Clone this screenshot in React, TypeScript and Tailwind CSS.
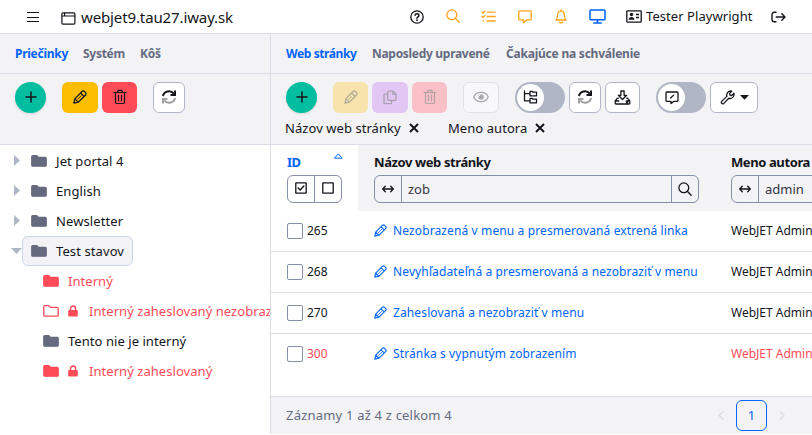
import React from 'react';

type IconProps = { w?: number; h?: number; vb?: string; className?: string; children: React.ReactNode };

function Icon({ w = 16, h = 16, vb, className = '', children }: IconProps) {
  return (
    <svg
      width={w}
      height={h}
      viewBox={vb ?? `0 0 ${w} ${h}`}
      fill="none"
      stroke="currentColor"
      strokeWidth="1.3"
      strokeLinecap="round"
      strokeLinejoin="round"
      className={`shrink-0 ${className}`}
    >
      {children}
    </svg>
  );
}

const Plus = () => (
  <Icon w={12} h={12} className="-mt-px"><path d="M6 1v10M1 6h10" strokeWidth="1.5" /></Icon>
);
const Pencil = ({ size = 14 }: { size?: number }) => (
  <Icon w={size} h={size} vb="0 0 14 14" className="-mt-px">
    <path d="M.9 13.1l.9-4.300L9 1.500a1.700 1.700 0 0 1 2.400 0l1.100 1.100a1.700 1.700 0 0 1 0 2.400L5.200 12.200zM7.600 3l3.400 3.400M1.900 8.900l3.200 3.200" strokeWidth="1.2" />
    <path d="M4.600 9.400l3.600-3.600" strokeWidth=".8" />
  </Icon>
);
const Trash = () => (
  <Icon w={14} h={16} className="-mt-px">
    <path d="M1 3.500h12M2.500 3.500v9.800a1.200 1.200 0 0 0 1.200 1.200h6.600a1.200 1.200 0 0 0 1.200-1.200V3.500M4.300 3.300l1-1.900h3.400l1 1.900" strokeWidth="1.2" />
    <path d="M5.500 6v5.800M8.500 6v5.800" strokeWidth="1.1" />
  </Icon>
);
const Copy = () => (
  <Icon w={14} h={15} className="-mt-px">
    <path d="M5.700 1.200h4.500L13 4v5.300a1 1 0 0 1-1 1H5.700a1 1 0 0 1-1-1V2.200a1 1 0 0 1 1-1zM9.800 1.300v3H13M4.600 4.200H2a1 1 0 0 0-1 1v7.500a1 1 0 0 0 1 1h5.500a1 1 0 0 0 1-1v-2.300" />
  </Icon>
);
const Eye = () => (
  <Icon w={16} h={12} className="-mt-px">
    <path d="M.8 6C3-.1 13-.1 15.2 6 13 12.1 3 12.1.8 6z" />
    <circle cx="8" cy="6" r="2.800" fill="currentColor" stroke="none" />
    <path d="M5.700 5.300l1.600-1.600" stroke="white" strokeWidth="1" />
  </Icon>
);
const Sync = () => (
  <Icon w={16} h={16} className="-mt-px">
    <path d="M1.900 7C2.800 2.200 9.500.4 12.700 4.600M14 1.600v4.500H9.500" strokeWidth="2" strokeLinecap="butt" strokeLinejoin="miter" />
    <path d="M14.100 9c-.9 4.800-7.600 6.600-10.800 2.400M2 14.400V9.900h4.500" strokeWidth="2" opacity=".4" strokeLinecap="butt" strokeLinejoin="miter" />
  </Icon>
);
const Tree = () => (
  <Icon w={15} h={14} className="-mt-px">
    <path d="M1.500 1v9.800h5M1.500 3.700h5M7 1.300h2l.8.9h3.700v3.600H7zM7 8.300h2l.8.9h3.700v3.600H7z" />
  </Icon>
);
const Download = () => (
  <Icon w={17} h={15} className="-mt-px">
    <path d="M6.900 1h3.200v4.300h2.500L8.500 9.500 4.400 5.300h2.500zM4.300 8.200H3.500L1.200 11v2.200c0 .4.3.8.8.8h13c.5 0 .8-.4.8-.8V11l-2.300-2.800h-.8M1.200 11h3.600M12.200 11h3.600M12.600 12.500h1" />
  </Icon>
);
const Feedback = () => (
  <Icon w={14} h={14}>
    <path d="M2 1h10a1 1 0 0 1 1 1v7.400a1 1 0 0 1-1 1H8.700L6 12.600v-2.200H2a1 1 0 0 1-1-1V2a1 1 0 0 1 1-1zM5.600 7l3.100-2.900" />
  </Icon>
);
const Wrench = () => (
  <Icon w={15} h={15} className="-mt-px">
    <path d="M1.700 11.400l5.100-5C6.100 3.500 8.400.4 11.800 1.100L9.600 3.400l.4 1.700 1.700.4 2.200-2.200c.8 3.400-2.200 5.800-5.100 5l-5 5.100c-1.400 1.200-3.300-.7-2.100-2z" />
  </Icon>
);
const Folder = ({ open = false }: { open?: boolean }) => (
  <Icon w={16} h={12}>
    <path d="M1.700.7h4.200l1.600 1.700h6.800c.5 0 .9.4.9.9v7c0 .5-.4.900-.9.900H1.700c-.5 0-.9-.4-.9-.9V1.600c0-.5.4-.9.9-.9z" fill={open ? 'none' : 'currentColor'} />
  </Icon>
);
const Lock = () => (
  <Icon w={10} h={12}>
    <path d="M2.500 5.500V3.600a2.500 2.500 0 0 1 5 0v1.900" strokeWidth="1.500" />
    <rect x=".2" y="5" width="9.600" height="6.600" rx="1" fill="currentColor" stroke="none" />
  </Icon>
);
const Cross = () => (
  <Icon w={10} h={10} className="-mt-px"><path d="M1 1l8 8M9 1L1 9" strokeWidth="2" strokeLinecap="butt" /></Icon>
);
const Arrows = () => (
  <Icon w={12} h={8}><path d="M.8 4h10.400M3.300 1.300L.7 4l2.600 2.700M8.700 1.300L11.300 4 8.700 6.700" strokeWidth="1.300" /></Icon>
);
const Search = () => (
  <Icon w={14} h={14} className="-mt-px"><circle cx="5.800" cy="5.800" r="4.900" /><path d="M9.300 9.300l3.900 3.900" /></Icon>
);
const Square = ({ checked = false }: { checked?: boolean }) => (
  <Icon w={12} h={12} className="-mt-0.5">
    <rect x=".8" y=".8" width="10.400" height="10.400" rx=".4" />
    {checked && <path d="M3.200 6l2 2 3.700-4" strokeWidth="1.400" />}
  </Icon>
);

function Btn({ className, children }: { className: string; children: React.ReactNode }) {
  return (
    <button className={`flex h-[31px] shrink-0 items-center justify-center rounded-md ${className}`}>{children}</button>
  );
}

const outlined = 'border border-[#b1b6c6] bg-white';

function AddButton() {
  return (
    <button className="flex size-[31px] shrink-0 items-center justify-center rounded-full bg-[#00be9f] shadow-sm"><Plus /></button>
  );
}

function Toggle({ children }: { children: React.ReactNode }) {
  return (
    <div className="flex h-[31px] w-[50px] shrink-0 items-center rounded-full bg-[#b1b6c6] pl-0.5">
      <span className="flex size-[27px] items-center justify-center rounded-full bg-white">{children}</span>
    </div>
  );
}

function Header() {
  return (
    <header className="flex h-[34px] shrink-0 items-center border-b border-[#dadde6] bg-white">
      <Icon w={14} h={12} className="ml-[26px]"><path d="M1 1.500h12M1 6.500h12M1 10.500h12" strokeWidth="1.200" strokeLinecap="butt" /></Icon>
      <Icon w={15} h={13} className="mt-1 ml-[21px]"><rect x=".9" y=".9" width="13" height="11.200" rx="1" strokeWidth="1.200" /><path d="M1 4h13M3.600 1v2.600" strokeWidth="1.200" /></Icon>
      <span className="ml-[5px] w-[160px] pt-px text-[15px] tracking-[-0.12px]">webjet9.tau27.iway.sk</span>
      <div className="ml-[169px] flex items-center">
        <Icon w={14} h={14}>
          <circle cx="7" cy="7" r="6.200" /><path d="M5.100 5.300c.2-2.200 3.900-2 3.800.2C8.900 6.800 7 6.800 7 8.300" strokeWidth="1.500" /><circle cx="7" cy="10.200" r=".9" fill="currentColor" stroke="none" />
        </Icon>
        <span className="ml-[22px] text-[#ffa319]"><Search /></span>
        <Icon w={15} h={13} className="ml-[21px] text-[#ffa319]"><path d="M.9 2.100l1.100 1L4 1M.9 6.500l1.100 1 2-2.100M6.200 2.100h8M6.200 6.500h8M6.200 11h8M2.200 11h.4" /></Icon>
        <Icon w={14} h={14} className="ml-[22px] text-[#ffa319]"><path d="M1.700.9h10.600c.5 0 .9.4.9.9V9c0 .5-.4.900-.9.900H8.800L5.500 12.800V9.900H1.700c-.5 0-.9-.4-.9-.9V1.800c0-.5.4-.9.9-.9z" /></Icon>
        <Icon w={12} h={15} className="ml-[23px] text-[#ffa319]"><path d="M6 .8v1M1 11h10c-1.300-1.500-1.600-2.300-1.600-5C9.400.7 2.600.7 2.600 6c0 2.700-.3 3.500-1.600 5zM4.500 13.200q1.500 1.300 3 0" /></Icon>
        <Icon w={17} h={15} className="ml-[22px] text-[#0063fb]"><rect x="1" y=".9" width="15" height="9.800" rx=".8" strokeWidth="1.500" /><path d="M8.500 11v2.500M5 14h7" strokeWidth="1.700" /></Icon>
        <Icon w={16} h={13} className="ml-5"><rect x=".8" y=".8" width="14.400" height="11.400" rx=".8" /><path d="M10 4.500h3M10 7.500h3" strokeLinecap="butt" /><circle cx="5.500" cy="4.500" r="1.700" fill="currentColor" stroke="none" /><path d="M2.600 9.800c0-3.800 5.800-3.800 5.800 0z" fill="currentColor" stroke="none" /></Icon>
        <span className="ml-1 w-[107px] pt-px text-[13px] tracking-[0.06px]">Tester Playwright</span>
        <Icon w={15} h={12} className="ml-[18px]"><path d="M5 1.300H3.300A2.300 2.300 0 0 0 1 3.600v4.800a2.300 2.300 0 0 0 2.300 2.300H5M5.300 6h8.500M10.800 2.800L14 6l-3.200 3.200" strokeWidth="1.400" /></Icon>
      </div>
    </header>
  );
}

function TreeRow({ label, state = 'closed', active = false }: { label: string; state?: string; active?: boolean }) {
  return (
    <li className="flex h-[30px] items-center">
      <span className="flex w-[22px] justify-end">
        {state === 'open' ? (
          <svg width="11" height="6" className="shrink-0"><path d="M0 0h11L5.500 6z" fill="#b1b6c6" /></svg>
        ) : (
          <svg width="6" height="12" className="mr-0.5 shrink-0"><path d="M0 0v11L6 5.500z" fill="#b1b6c6" /></svg>
        )}
      </span>
      <span className={`flex h-[30px] items-center rounded-md border pl-2 ${active ? 'w-[111px] border-[#ccd4e8] bg-[#f3f3f6]' : 'border-transparent'}`}>
        <span className="text-[#656a7f]"><Folder /></span>
        <span className="ml-[9px] pt-0.5 text-[13px] tracking-[0.1px]">{label}</span>
      </span>
    </li>
  );
}

function ChildRow({ label, red = true, open = false, locked = false }: { label: string; red?: boolean; open?: boolean; locked?: boolean }) {
  return (
    <li className={`flex h-[30px] items-center pl-[43px] whitespace-nowrap ${red ? 'text-[#ff4b58]' : ''}`}>
      <span className={red ? '' : 'text-[#656a7f]'}><Folder open={open} /></span>
      {locked && <span className="ml-[9px]"><Lock /></span>}
      <span className={`pt-0.5 text-[13px] tracking-[0.05px] ${locked ? 'ml-[11px]' : 'ml-[9px]'}`}>{label}</span>
    </li>
  );
}

function Sidebar() {
  return (
    <aside className="w-[270px] shrink-0 overflow-hidden">
      <nav className="flex h-10 items-center border-b border-[#dadde6] bg-[#f3f3f6] pl-[15px] text-xs font-bold tracking-[-0.27px] text-[#656a7f]">
        <span className="w-[68px] text-[#0063fb]">Priečinky</span>
        <span className="w-[57px]">Systém</span>
        <span>Kôš</span>
      </nav>
      <div className="flex h-[71px] items-start border-b border-[#dadde6] bg-[#f3f3f6] pt-2 pl-[15px]">
        <AddButton />
        <Btn className="ml-4 w-9 bg-[#fabd00]"><Pencil /></Btn>
        <Btn className="ml-1 w-[35px] bg-[#ff4b58]"><Trash /></Btn>
        <Btn className={`ml-4 w-8 ${outlined}`}><Sync /></Btn>
      </div>
      <ul className="pt-px">
        <TreeRow label="Jet portal 4" />
        <TreeRow label="English" />
        <TreeRow label="Newsletter" />
        <TreeRow label="Test stavov" state="open" active />
        <ChildRow label="Interný" />
        <ChildRow label="Interný zaheslovaný nezobrazený" open locked />
        <ChildRow label="Tento nie je interný" red={false} />
        <ChildRow label="Interný zaheslovaný" locked />
      </ul>
    </aside>
  );
}

const rows = [
  { id: 265, title: 'Nezobrazená v menu a presmerovaná extrená linka' },
  { id: 268, title: 'Nevyhľadateľná a presmerovaná a nezobraziť v menu' },
  { id: 270, title: 'Zaheslovaná a nezobraziť v menu' },
  { id: 300, title: 'Stránka s vypnutým zobrazením', red: true },
];

function Filter({ value, className, search = false }: { value: string; className: string; search?: boolean }) {
  return (
    <div className={`mt-1 flex h-7 rounded-md border border-[#868ea8] ${className}`}>
      <span className="flex w-[27px] shrink-0 items-center justify-center border-r border-[#868ea8]"><Arrows /></span>
      <span className="flex flex-1 items-center pt-px pl-1.5 text-[13px] text-[#33353f]">{value}</span>
      {search && <span className="flex w-[27px] shrink-0 items-center justify-center border-l border-[#868ea8]"><Search /></span>}
    </div>
  );
}

function Main() {
  return (
    <main className="flex min-w-0 flex-1 flex-col overflow-hidden border-l border-[#dadde6] whitespace-nowrap">
      <nav className="flex h-10 shrink-0 items-center border-b border-[#dadde6] bg-[#f3f3f6] pl-[15px] text-xs font-bold text-[#656a7f]">
        <span className="w-[86px] tracking-[-0.4px] text-[#0063fb]">Web stránky</span>
        <span className="w-[134px] tracking-[-0.3px]">Naposledy upravené</span>
        <span className="tracking-[-0.22px]">Čakajúce na schválenie</span>
      </nav>
      <div className="h-[71px] shrink-0 border-b border-[#dadde6] bg-[#f3f3f6] pt-2">
        <div className="flex pl-[15px]">
          <AddButton />
          <Btn className="ml-4 w-[35px] bg-[#f7e3ab] text-[#b1aa98]"><Pencil /></Btn>
          <Btn className="ml-1 w-9 bg-[#e2c6f4] text-[#aaa0b3]"><Copy /></Btn>
          <Btn className="ml-1 w-[35px] bg-[#f9c1c7] text-[#b49fa3]"><Trash /></Btn>
          <Btn className="ml-4 w-9 border border-[#e1e2e8] bg-[#f8f8fa] text-[#aaaaad]"><Eye /></Btn>
          <div className="ml-4 flex gap-1">
            <Toggle><Tree /></Toggle>
            <Btn className={`w-8 ${outlined}`}><Sync /></Btn>
            <Btn className={`w-[35px] ${outlined}`}><Download /></Btn>
          </div>
          <div className="ml-4 flex gap-1">
            <Toggle><Feedback /></Toggle>
            <Btn className={`w-12 gap-[5px] ${outlined}`}>
              <Wrench />
              <svg width="9" height="5" className="-mt-px"><path d="M0 0h9L4.500 4.800z" fill="currentColor" /></svg>
            </Btn>
          </div>
        </div>
        <div className="flex h-[31px] items-center pl-3.5 text-[13px] tracking-[0.06px]">
          <span className="w-[124px]">Názov web stránky</span><Cross />
          <span className="ml-[29px] w-[87px]">Meno autora</span><Cross />
        </div>
      </div>
      <div className="flex h-[66px] shrink-0 bg-[#f3f3f6]">
        <div className="w-[87px] shrink-0 bg-white pt-2 pl-4">
          <div className="flex h-[18px] w-14 items-center justify-between text-[13px] font-bold text-[#0063fb]">
            <span className="pt-0.5 tracking-[-0.6px]">ID</span>
            <Icon w={9} h={6} className="-mt-3"><path d="M.8 5.200h7.400L4.500 1.200z" strokeWidth="1" /></Icon>
          </div>
          <div className="mt-1 flex h-7 w-[55px] rounded-md border border-[#868ea8]">
            <span className="flex w-[27px] items-center justify-center border-r border-[#868ea8]"><Square checked /></span>
            <span className="flex flex-1 items-center justify-center"><Square /></span>
          </div>
        </div>
        <div className="w-[357px] shrink-0 pt-2 pl-4">
          <div className="h-[18px] text-[13px] leading-[18px] font-bold tracking-[-0.4px]">Názov web stránky</div>
          <Filter value="zob" className="w-[325px]" search />
        </div>
        <div className="w-[200px] shrink-0 pt-2 pl-4">
          <div className="h-[18px] text-[13px] leading-[18px] font-bold tracking-[-0.4px]">Meno autora</div>
          <Filter value="admin" className="w-[180px]" />
        </div>
      </div>
      <div className="h-[185px] shrink-0">
        {rows.map((r) => (
          <div key={r.id} className={`flex h-[41px] items-center border-b text-xs ${r.red ? 'border-transparent text-[#ff4b58]' : 'border-[#dadde6]'}`}>
            <div className="flex w-[87px] shrink-0 items-center pl-4">
              <span className="-mt-px size-4 rounded-xs border border-[#868ea8] bg-white" />
              <span className="ml-1">{r.id}</span>
            </div>
            <div className="flex w-[357px] shrink-0 items-center pl-4 text-[#0063fb]">
              <Pencil size={13} />
              <span className="ml-1.5 tracking-[0.12px]">{r.title}</span>
            </div>
            <div className="pl-4">WebJET Admin</div>
          </div>
        ))}
      </div>
      <footer className="flex h-[38px] shrink-0 items-center border-t border-[#dadde6] bg-[#f3f3f6] pl-[15px] text-[13px] text-[#656a7f]">
        <span className="w-[432px] shrink-0 tracking-[0.2px]">Záznamy 1 až 4 z celkom 4</span>
        <Icon w={6} h={9} className="text-[#dadde6]"><path d="M5 .8L1 4.500l4 3.700" /></Icon>
        <span className="ml-3 flex h-[31px] w-[31px] items-center justify-center rounded-md border border-[#0063fb] text-[#0063fb]">1</span>
        <Icon w={6} h={9} className="ml-3 text-[#dadde6]"><path d="M1 .8l4 3.700-4 3.700" /></Icon>
      </footer>
    </main>
  );
}

export default function App() {
  return (
    <div className="flex h-[435px] w-[812px] flex-col overflow-hidden bg-white font-['Noto_Sans',sans-serif] text-[#13151b]">
      <Header />
      <div className="flex h-[400px]">
        <Sidebar />
        <Main />
      </div>
    </div>
  );
}
